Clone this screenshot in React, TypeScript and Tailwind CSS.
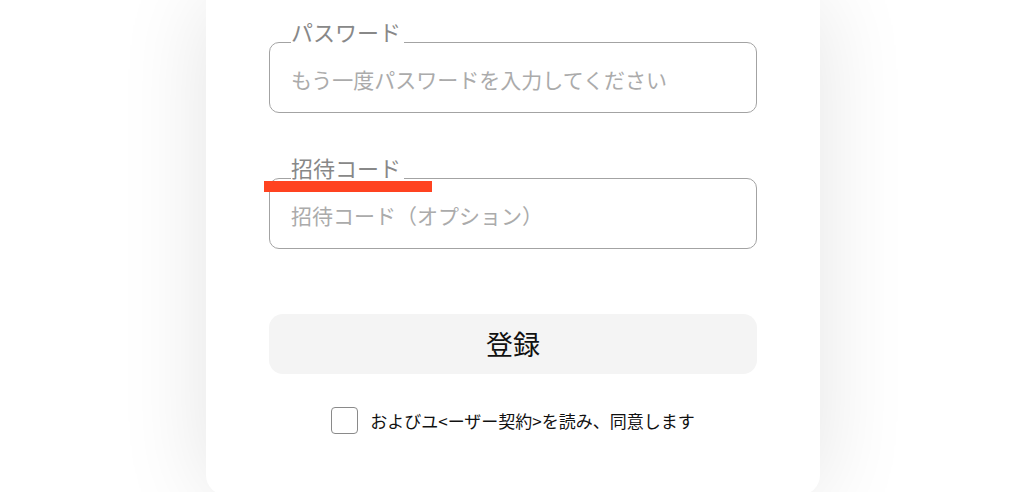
import { useState } from "react";

const font = { fontFamily: '"Noto Sans CJK JP", "Noto Sans", sans-serif' };

function Field({ label, placeholder, type = "text", marked = false }: { label: string; placeholder: string; type?: string; marked?: boolean }) {
  return (
    <div className="relative">
      <fieldset className="border border-[#a3a3a3] rounded-[10px] px-[21px] pb-[18px]">
        <legend className="text-[22px] leading-[22px] pb-[22px] pr-[3px] text-[#888888]">{label}</legend>
        <input
          type={type}
          placeholder={placeholder}
          className="block w-full h-[30px] text-[21px] leading-[30px] outline-none bg-transparent text-[#333] placeholder:text-[#ababab]"
          style={font}
        />
      </fieldset>
      {marked && <div className="absolute left-[-5px] top-[25px] w-[168px] h-[11px] bg-[#ff4320]" />}
    </div>
  );
}

export default function App() {
  const [agreed, setAgreed] = useState(false);

  return (
    <div className="w-full h-[492px] overflow-hidden bg-white flex justify-center pl-[2px]" style={font}>
      <div className="w-[614px] h-[495px] shrink-0 bg-white rounded-b-[20px] shadow-[0_0_90px_rgba(0,0,0,0.11)] px-[63px] pt-[20px] flex flex-col">
        <Field label="パスワード" placeholder="もう一度パスワードを入力してください" type="password" />
        <div className="mt-[43px]">
          <Field label="招待コード" placeholder="招待コード（オプション）" marked />
        </div>
        <button className="mt-[65px] h-[60px] w-full rounded-[14px] bg-[#f4f4f4] text-[27px] text-[#111]">
          登録
        </button>
        <label className="mt-[33px] flex items-center justify-center gap-[12px] cursor-pointer">
          <input type="checkbox" checked={agreed} onChange={() => setAgreed(!agreed)} className="sr-only" />
          <span className="w-[27px] h-[27px] border-[1.5px] border-[#8a8a8a] rounded-[4px] flex items-center justify-center">
            {agreed && <span className="w-[13px] h-[13px] bg-[#333] rounded-[2px]" />}
          </span>
          <span className="text-[17px] text-[#111]">およびユ&lt;ーザー契約&gt;を読み、同意します</span>
        </label>
      </div>
    </div>
  );
}
